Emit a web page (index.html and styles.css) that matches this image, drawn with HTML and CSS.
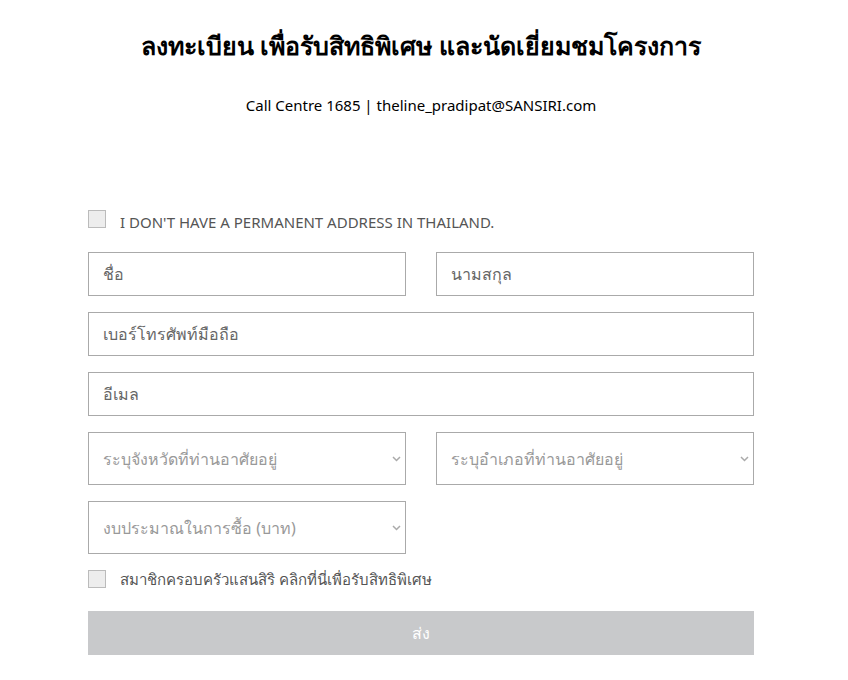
FILE: index.html
```html
<!DOCTYPE html>
<html lang="th">
<head>
  <meta charset="UTF-8" />
  <meta name="viewport" content="width=device-width, initial-scale=1.0"/>
  <title>ลงทะเบียน</title>
  <link rel="stylesheet" href="styles.css">
</head>
<body>
  <div class="wrap">
    <h1>ลงทะเบียน เพื่อรับสิทธิพิเศษ และนัดเยี่ยมชมโครงการ</h1>
    <p class="contact">Call Centre 1685 | theline_pradipat@SANSIRI.com</p>

    <form class="reg-form">
      <label class="check">
        <input type="checkbox">
        <span class="box"></span>
        <span class="check-text upper">I don't have a permanent address in Thailand.</span>
      </label>

      <div class="row two">
        <input class="field" type="text" placeholder="ชื่อ">
        <input class="field" type="text" placeholder="นามสกุล">
      </div>
      <div class="row">
        <input class="field" type="tel" placeholder="เบอร์โทรศัพท์มือถือ">
      </div>
      <div class="row">
        <input class="field" type="email" placeholder="อีเมล">
      </div>

      <div class="row two">
        <div class="select">
          <select><option>ระบุจังหวัดที่ท่านอาศัยอยู่</option></select>
          <svg class="chev" width="9" height="6" viewBox="0 0 9 6"><path d="M1 1l3.5 3.5L8 1" fill="none" stroke="#aaa" stroke-width="1.5"/></svg>
        </div>
        <div class="select">
          <select><option>ระบุอำเภอที่ท่านอาศัยอยู่</option></select>
          <svg class="chev" width="9" height="6" viewBox="0 0 9 6"><path d="M1 1l3.5 3.5L8 1" fill="none" stroke="#aaa" stroke-width="1.5"/></svg>
        </div>
      </div>
      <div class="row two">
        <div class="select">
          <select><option>งบประมาณในการซื้อ (บาท)</option></select>
          <svg class="chev" width="9" height="6" viewBox="0 0 9 6"><path d="M1 1l3.5 3.5L8 1" fill="none" stroke="#aaa" stroke-width="1.5"/></svg>
        </div>
      </div>

      <label class="check member">
        <input type="checkbox">
        <span class="box"></span>
        <span class="check-text">สมาชิกครอบครัวแสนสิริ คลิกที่นี่เพื่อรับสิทธิพิเศษ</span>
      </label>

      <button class="btn-send" type="button">ส่ง</button>
    </form>
  </div>
</body>
</html>
```

FILE: styles.css
```css
body {
  margin: 0;
  font-family: 'Noto Sans', 'Liberation Sans', sans-serif;
  background-color: #fff;
  color: #000;
}

.wrap {
  width: 666px;
  margin-left: 88px;
  padding-top: 28px;
}

h1 {
  margin: 0;
  text-align: center;
  font-size: 25px;
  font-weight: bold;
  line-height: 34px;
}

.contact {
  margin: 33px 0 0;
  text-align: center;
  font-size: 15px;
  line-height: 20px;
}

.reg-form {
  margin-top: 94px;
}

.check {
  display: flex;
  align-items: center;
  gap: 14px;
  height: 20px;
  cursor: pointer;
}

.check input {
  display: none;
}

.box {
  width: 16px;
  height: 16px;
  border: 1px solid #bbb;
  background-color: #ededed;
}

.check-text {
  font-size: 15px;
  line-height: 20px;
  color: #555;
}

.upper {
  text-transform: uppercase;
  margin-top: 6px;
}

.row {
  display: flex;
  gap: 30px;
  margin-top: 16px;
}

.check + .row {
  margin-top: 23px;
}

.row.two > * {
  width: 318px;
  flex: none;
}

.field {
  flex: 1;
  height: 44px;
  box-sizing: border-box;
  border: 1px solid #aaa;
  padding: 0 14px;
  font-family: inherit;
  font-size: 16px;
  color: #333;
  outline: none;
}

.field::placeholder {
  color: #666;
}

.select {
  position: relative;
}

.select select {
  width: 100%;
  height: 53px;
  box-sizing: border-box;
  border: 1px solid #aaa;
  background: #fff;
  padding: 0 14px;
  font-family: inherit;
  font-size: 16px;
  color: #999;
  appearance: none;
  outline: none;
}

.chev {
  position: absolute;
  right: 5px;
  top: 24px;
  pointer-events: none;
}

.member {
  margin-top: 15px;
}

.btn-send {
  display: block;
  width: 100%;
  height: 44px;
  margin-top: 22px;
  border: none;
  background-color: #c8c9cb;
  color: #fff;
  font-family: inherit;
  font-size: 16px;
  cursor: pointer;
}
```
